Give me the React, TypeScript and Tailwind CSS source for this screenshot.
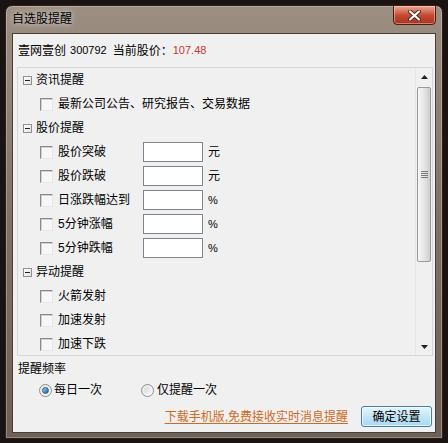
import React from "react";

type Row =
  | { kind: "group"; label: string }
  | { kind: "check"; label: string; unit?: string };

const rows: Row[] = [
  { kind: "group", label: "资讯提醒" },
  { kind: "check", label: "最新公司公告、研究报告、交易数据" },
  { kind: "group", label: "股价提醒" },
  { kind: "check", label: "股价突破", unit: "元" },
  { kind: "check", label: "股价跌破", unit: "元" },
  { kind: "check", label: "日涨跌幅达到", unit: "%" },
  { kind: "check", label: "5分钟涨幅", unit: "%" },
  { kind: "check", label: "5分钟跌幅", unit: "%" },
  { kind: "group", label: "异动提醒" },
  { kind: "check", label: "火箭发射" },
  { kind: "check", label: "加速发射" },
  { kind: "check", label: "加速下跌" },
];

function Expander() {
  return (
    <span className="w-[9px] h-[9px] shrink-0 border border-[#919191] bg-gradient-to-br from-white to-[#e2e2e2] flex items-center justify-center">
      <span className="w-[5px] h-px bg-[#222]" />
    </span>
  );
}

function Check() {
  return (
    <span className="w-[13px] h-[13px] shrink-0 border border-t-[#8a8a8a] border-l-[#8a8a8a] border-r-[#e6e6e6] border-b-[#e6e6e6] bg-[#f7f7f7] shadow-[inset_1px_1px_0_#cfcfcf]" />
  );
}

function Radio({ on }: { on?: boolean }) {
  return (
    <span className="w-[13px] h-[13px] shrink-0 rounded-full border border-[#8a8f96] bg-gradient-to-br from-[#e6e6e6] to-[#fbfbfb] flex items-center justify-center">
      {on ? (
        <span className="w-[7px] h-[7px] rounded-full bg-gradient-to-br from-[#9fd2f2] to-[#1d5d91] border border-[#2a5d86]" />
      ) : (
        <span className="w-[7px] h-[7px] rounded-full bg-gradient-to-br from-[#d8d8d8] to-[#f6f6f6]" />
      )}
    </span>
  );
}

function Arrow({ up }: { up?: boolean }) {
  return (
    <svg width="7" height="4" viewBox="0 0 7 4">
      <path d={up ? "M0 4 L3.5 0 L7 4 Z" : "M0 0 L7 0 L3.5 4 Z"} fill="#222" />
    </svg>
  );
}

function ScrollBar() {
  return (
    <div className="w-[17px] shrink-0 flex flex-col bg-[#f0f0f0] border-l border-[#e6e6e6]">
      <div className="h-[17px] flex items-center justify-center">
        <Arrow up />
      </div>
      <div className="flex-1 px-px pt-[2px]">
        <div className="h-[175px] rounded-[2px] border border-[#9a9a9a] bg-gradient-to-r from-[#f6f6f6] via-[#e6e6e6] to-[#cdcdcd] flex flex-col items-center justify-center gap-px">
          <span className="w-[7px] h-px bg-[#7a7a7a]" />
          <span className="w-[7px] h-px bg-[#7a7a7a]" />
          <span className="w-[7px] h-px bg-[#7a7a7a]" />
          <span className="w-[7px] h-px bg-[#7a7a7a]" />
        </div>
      </div>
      <div className="h-[17px] flex items-center justify-center">
        <Arrow />
      </div>
    </div>
  );
}

export default function App() {
  return (
    <div className="w-[448px] h-[443px] bg-[#1a1311] pt-[5px] pl-[5px] font-['Liberation_Sans','Noto_Sans_CJK_SC',sans-serif] text-[12px] text-black overflow-hidden">
      <div className="w-[438px] h-[434px] rounded-t-[7px] border border-[#2b221d] bg-gradient-to-b from-[#9c8f82] via-[#7f7166] to-[#6e6056] flex flex-col px-[6px] pb-[5px] shadow-[inset_0_0_0_1px_rgba(255,255,255,0.25)]">
        <div className="h-[27px] shrink-0 flex justify-between">
          <span className="mt-[5px] leading-[16px] [text-shadow:0_0_6px_rgba(255,255,255,0.9)]">
            自选股提醒
          </span>
          <div className="w-[43px] h-[20px] -mt-px rounded-b-[4px] border border-[#4a1b12] bg-gradient-to-b from-[#e9a897] via-[#c74a33] to-[#a8321f] shadow-[inset_0_0_0_1px_rgba(255,220,210,0.45)] flex items-center justify-center">
            <svg width="13" height="11" viewBox="0 0 13 11">
              <path d="M2 1.5 L11 9.5 M11 1.5 L2 9.5" stroke="#5a2218" strokeWidth="4" strokeLinecap="round" />
              <path d="M2 1.5 L11 9.5 M11 1.5 L2 9.5" stroke="#ffffff" strokeWidth="2.2" strokeLinecap="round" />
            </svg>
          </div>
        </div>
        <div className="flex-1 bg-[#f0f0f0] border border-[#4a3f37] flex flex-col">
          <div className="h-[33px] shrink-0 flex items-center pl-[5px]">
            <span>壹网壹创</span>
            <span className="text-[11px] ml-[4px]">300792</span>
            <span className="ml-[6px]">当前股价：</span>
            <span className="text-[11px] text-[#c83a32]">107.48</span>
          </div>
          <div className="h-[289px] shrink-0 ml-[4px] mr-[2px] border border-[#d6d6d6] flex overflow-hidden">
            <div className="flex-1 flex flex-col">
              {rows.map((r, i) =>
                r.kind === "group" ? (
                  <div key={i} className="h-[24px] shrink-0 flex items-center pl-[5px] gap-[4px]">
                    <Expander />
                    <span>{r.label}</span>
                  </div>
                ) : (
                  <div key={i} className="h-[24px] shrink-0 flex items-center pl-[22px]">
                    <Check />
                    {r.unit ? (
                      <>
                        <span className="ml-[5px] w-[85px]">{r.label}</span>
                        <span className="w-[60px] h-[20px] bg-white border border-[#7f858c]" />
                        <span className={`ml-[5px] ${r.unit === "%" ? "text-[11px]" : ""}`}>{r.unit}</span>
                      </>
                    ) : (
                      <span className="ml-[5px]">{r.label}</span>
                    )}
                  </div>
                )
              )}
            </div>
            <ScrollBar />
          </div>
          <div className="h-[25px] shrink-0 flex items-center pl-[5px]">提醒频率</div>
          <div className="h-[18px] shrink-0 flex items-center pl-[26px]">
            <Radio on />
            <span className="ml-[2px]">每日一次</span>
            <span className="ml-[39px]">
              <Radio />
            </span>
            <span className="ml-[3px]">仅提醒一次</span>
          </div>
          <div className="mt-[7px] shrink-0 flex items-center justify-end pr-[3px]">
            <span className="text-[#cf6a24] underline underline-offset-2">下载手机版,免费接收实时消息提醒</span>
            <span className="ml-[13px] w-[71px] h-[21px] rounded-[3px] border border-[#3c7fb1] bg-gradient-to-b from-[#e8f5fc] via-[#c4e5f6] to-[#a7d8f3] shadow-[inset_0_0_0_1px_rgba(255,255,255,0.7)] flex items-center justify-center">
              确定设置
            </span>
          </div>
        </div>
      </div>
    </div>
  );
}
